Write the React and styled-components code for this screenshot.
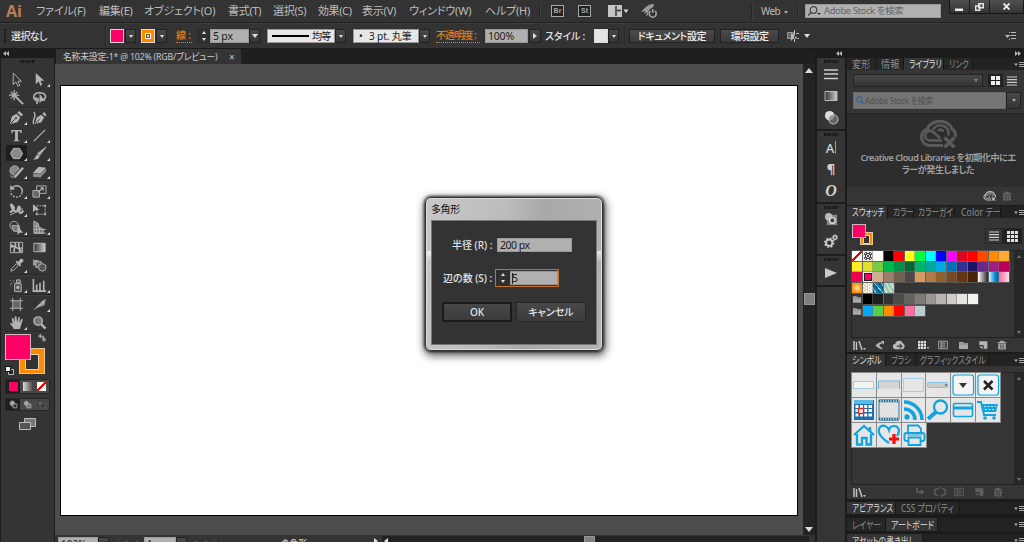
// src/App.jsx
import React from 'react';
import styled, { createGlobalStyle } from 'styled-components';

const GlobalStyle = createGlobalStyle`
  * { box-sizing: border-box; }
  body {
    margin: 0;
    overflow: hidden;
    background: #1b1b1b;
    font-family: "Noto Sans", "Noto Sans CJK JP", sans-serif;
    font-feature-settings: "palt";
    font-size: 10px;
    color: #c8c8c8;
  }
  svg { display: block; flex: none; }
`;

const Window = styled.div`
  display: flex;
  flex-direction: column;
  width: 1024px;
  height: 542px;
  overflow: hidden;
`;

const Text = styled.span`
  flex: none;
  white-space: nowrap;
  line-height: 14px;
  width: ${({ $w }) => ($w ? `${$w}px` : 'auto')};
  margin-left: ${({ $ml }) => $ml || 0}px;
  font-size: ${({ $size }) => $size || 11}px;
  font-weight: ${({ $bold }) => ($bold ? 500 : 400)};
  letter-spacing: ${({ $ls }) => $ls || 0}px;
  color: ${({ $color }) => $color || 'inherit'};
  ${({ $narrow }) => $narrow && `transform: scaleX(${$narrow}); transform-origin: left;`}
`;

const Spacer = styled.div`
  flex: ${({ $w }) => ($w ? `0 0 ${$w}px` : 1)};
`;

/* ---------- menu bar ---------- */

const MenuBar = styled.div`
  display: flex;
  align-items: center;
  flex: none;
  height: 23px;
  background: #333;
  border-bottom: 1px solid #222;
  box-shadow: 0 1px 0 #3d3d3d;
  color: #bdbdbd;
`;

const Logo = styled.div`
  flex: none;
  width: 30px;
  padding-left: 6px;
  font: bold 16px/20px "Open Sans", sans-serif;
  color: #bd7c59;
`;

const Divider = styled.div`
  flex: none;
  width: 2px;
  height: ${({ $h }) => $h || 16}px;
  margin-left: ${({ $ml }) => $ml || 0}px;
  background: #262626;
  border-right: 1px solid #3e3e3e;
`;

const AppBadge = styled.div`
  flex: none;
  width: 13px;
  height: 12px;
  margin-left: ${({ $ml }) => $ml}px;
  border: 1px solid #a9a9a9;
  background: #222;
  color: #a9a9a9;
  font: bold 7px/10px "Liberation Sans", sans-serif;
  text-align: center;
`;

const StockSearch = styled.div`
  display: flex;
  align-items: center;
  flex: none;
  width: 136px;
  height: 14px;
  margin-left: 6px;
  padding-left: 2px;
  background: #b0b0b0;
  border: 1px solid #999;
`;

const WindowButtons = styled.div`
  display: flex;
  align-self: flex-start;
  width: 75px;
  height: 14px;
  margin-left: 8px;
  border: solid #151515;
  border-width: 0 0 1px 1px;
  border-radius: 0 0 0 3px;
  background: linear-gradient(#505050, #343434);
`;

const WindowButton = styled.div`
  display: flex;
  align-items: center;
  justify-content: center;
  width: ${({ $w }) => $w}px;
  border-right: 1px solid #1b1b1b;
`;

/* ---------- control bar ---------- */

const ControlBar = styled.div`
  display: flex;
  align-items: center;
  flex: none;
  height: 26px;
  padding-left: 4px;
  background: #333;
  border-top: 1px solid #3d3d3d;
  border-bottom: 1px solid #1a1a1a;
  color: #e0e0e0;
`;

const Grip = styled.div`
  flex: none;
  width: ${({ $across }) => ($across ? 15 : 2)}px;
  height: ${({ $across }) => ($across ? 3 : 14)}px;
  background: repeating-linear-gradient(
    ${({ $across }) => ($across ? '90deg' : '180deg')},
    #1a1a1a 0 1.5px,
    #2d2d2d 1.5px 2.5px
  );
`;

const ColorChip = styled.div`
  display: flex;
  align-items: center;
  justify-content: center;
  flex: none;
  width: 14px;
  height: 14px;
  margin-left: ${({ $ml }) => $ml || 0}px;
  background: ${({ $color }) => $color};
  border: 1px solid ${({ $edge }) => $edge || '#d8d8d8'};
`;

const ChipHole = styled.div`
  width: 6px;
  height: 6px;
  border: 1px solid #fff;
  outline: 1px solid #7c4a10;
  outline-offset: -2px;
  background: #ddd;
`;

const DropButton = styled.div`
  display: flex;
  align-items: center;
  justify-content: center;
  flex: none;
  width: ${({ $w }) => $w || 11}px;
  height: ${({ $h }) => $h || 14}px;
  margin-left: ${({ $ml }) => $ml || 0}px;
  background: linear-gradient(#484848, #353535);
  border: 1px solid #222;
`;

const Triangle = styled.i`
  flex: none;
  width: 0;
  height: 0;
  margin: ${({ $m }) => $m || 0};
  border-style: solid;
  border-color: transparent;
  ${({ $dir, $s = 3, $color = '#ddd' }) => {
    if ($dir === 'up') return `border-width: 0 ${$s}px ${$s + 1}px; border-bottom-color: ${$color};`;
    if ($dir === 'right') return `border-width: ${$s}px 0 ${$s}px ${$s + 1}px; border-left-color: ${$color};`;
    if ($dir === 'left') return `border-width: ${$s}px ${$s + 1}px ${$s}px 0; border-right-color: ${$color};`;
    return `border-width: ${$s + 1}px ${$s}px 0; border-top-color: ${$color};`;
  }}
`;

const Stepper = styled.div`
  display: flex;
  flex-direction: column;
  align-items: center;
  justify-content: space-between;
  flex: none;
  width: 12px;
  height: 14px;
  padding: 1px 0;
  margin-left: ${({ $ml }) => $ml || 0}px;
  background: #303030;
  border: 1px solid #292929;
`;

const Field = styled.div`
  display: flex;
  align-items: center;
  flex: none;
  width: ${({ $w }) => $w}px;
  height: ${({ $h }) => $h || 14}px;
  margin-left: ${({ $ml }) => $ml || 0}px;
  padding-left: ${({ $pl }) => $pl || 2}px;
  background: ${({ $bg }) => $bg || '#b0b0b0'};
  border: 1px solid ${({ $edge }) => $edge || '#999'};
  color: #1c1c1c;
`;

const StrokeLine = styled.div`
  width: 37px;
  height: 2px;
  margin: 0 3px 0 2px;
  background: #000;
`;

const BarButton = styled.div`
  display: flex;
  align-items: center;
  justify-content: center;
  flex: none;
  width: ${({ $w }) => $w}px;
  height: 14px;
  margin-left: ${({ $ml }) => $ml}px;
  background: linear-gradient(#4b4b4b, #3a3a3a);
  border: 1px solid #222;
  color: #eee;
`;

const DottedText = styled(Text)`
  height: 14px;
  line-height: 12px;
  border-bottom: 1px dotted #e07f22;
`;

/* ---------- work area ---------- */

const Body = styled.div`
  display: flex;
  flex: 1;
  min-height: 0;
`;

const Column = styled.div`
  display: flex;
  flex-direction: column;
  flex: none;
  width: ${({ $w }) => $w}px;
  margin-right: ${({ $mr }) => $mr || 0}px;
`;

const DockHeader = styled.div`
  display: flex;
  align-items: center;
  justify-content: ${({ $end }) => ($end ? 'flex-end' : 'flex-start')};
  flex: none;
  height: 9px;
  padding: 0 3px;
  background: #1c1c1c;
`;

const ToolPanel = styled.div`
  display: flex;
  flex-direction: column;
  align-items: center;
  flex: 1;
  padding-top: 2px;
  margin-left: 1px;
  background: #343434;
`;

const ToolGroup = styled.div`
  display: grid;
  grid-template-columns: 23px 23px;
  grid-auto-rows: 18px;
  margin-top: ${({ $mt }) => $mt || 0}px;
  padding-bottom: ${({ $pb }) => $pb || 0}px;
  border-bottom: 1px solid #282828;
  box-shadow: 0 1px 0 #3c3c3c;
`;

const ToolCell = styled.div`
  position: relative;
  display: flex;
  align-items: center;
  justify-content: center;
  margin: 1px 1px;
  background: ${({ $active }) => ($active ? '#1e1e1e' : 'transparent')};
`;

const Corner = styled.i`
  position: absolute;
  right: 0;
  bottom: 0;
  border: solid transparent;
  border-width: 0 0 3px 3px;
  border-bottom-color: #ddd;
`;

const ColorWell = styled.div`
  position: relative;
  width: 46px;
  height: 43px;
  margin-top: 1px;
`;

const WellFill = styled.div`
  position: absolute;
  left: ${({ $x }) => $x}px;
  top: ${({ $y }) => $y}px;
  width: ${({ $s }) => $s}px;
  height: ${({ $s }) => $s}px;
  background: #ff0066;
  border: 1px solid #d5b5c0;
`;

const WellStroke = styled.div`
  position: absolute;
  left: ${({ $x }) => $x}px;
  top: ${({ $y }) => $y}px;
  width: ${({ $s }) => $s}px;
  height: ${({ $s }) => $s}px;
  padding: ${({ $p }) => $p}px;
  background: #ff8a00;
  border: 1px solid #e0c8a0;

  &::after {
    content: '';
    display: block;
    height: 100%;
    background: #333;
    border: 1px solid #e8d8b8;
  }
`;

const WellIcon = styled.div`
  position: absolute;
  left: ${({ $x }) => $x}px;
  top: ${({ $y }) => $y}px;
`;

const Modes = styled.div`
  display: flex;
  width: 45px;
  height: ${({ $h }) => $h}px;
  margin-top: ${({ $mt }) => $mt}px;
  background: #484848;
  border: 1px solid #262626;
`;

const Mode = styled.div`
  display: flex;
  align-items: center;
  justify-content: center;
  flex: 1;
  background: ${({ $on }) => ($on ? '#1f1f1f' : 'transparent')};
`;

const ModeChip = styled.div`
  width: 9px;
  height: 9px;
  background: ${({ $bg }) => $bg};
`;

/* ---------- document ---------- */

const TabStrip = styled.div`
  display: flex;
  flex: none;
  height: 15px;
  background: #1f1f1f;
`;

const DocTab = styled.div`
  display: flex;
  align-items: center;
  width: 185px;
  padding-left: 7px;
  background: #343434;
  color: #c9c9c9;
`;

const DocRow = styled.div`
  display: flex;
  flex: none;
  height: 471px;
`;

const Pasteboard = styled.div`
  width: 748px;
  padding: 21px 5px 0 5px;
  background: #4d4d4d;
`;

const Artboard = styled.div`
  height: 431px;
  background: #fff;
  border: 1px solid #000;
`;

const VScroll = styled.div`
  display: flex;
  flex-direction: column;
  align-items: center;
  width: 12px;
  padding: 4px 0 3px;
  background: #242424;
`;

const Thumb = styled.div`
  width: 11px;
  height: 12px;
  background: #808080;
  border: 1px solid #969696;
`;

const StatusBar = styled.div`
  display: flex;
  align-items: flex-start;
  flex: 1;
  padding: 2px 0 0 3px;
  background: #343434;
  overflow: hidden;
`;

const HTrack = styled.div`
  display: flex;
  align-self: stretch;
  align-items: flex-start;
  width: 427px;
  margin: -1px 0 0 4px;
  padding-left: 2px;
  background: #222;
`;

/* ---------- icon dock ---------- */

const DockGroup = styled.div`
  display: flex;
  flex-direction: column;
  align-items: center;
  flex: none;
  height: ${({ $h }) => $h}px;
  padding-top: 2px;
  background: #353535;
  border-bottom: 2px solid #1d1d1d;
`;

const DockIcon = styled.div`
  display: flex;
  align-items: center;
  justify-content: center;
  width: 28px;
  height: 21.5px;
  margin-top: ${({ $mt }) => $mt || 0}px;
  color: #d2d2d2;
  font: ${({ $font }) => $font || '14px "Noto Sans"'};
`;

const Caret = styled.i`
  width: 1px;
  height: 13px;
  margin-left: 1px;
  background: #999;
`;

/* ---------- panels ---------- */

const PanelTabs = styled.div`
  display: flex;
  flex: none;
  height: ${({ $h }) => $h || 12}px;
  margin-top: ${({ $mt }) => $mt || 0}px;
  background: #222;
`;

const PanelTab = styled.div`
  display: flex;
  align-items: center;
  flex: none;
  width: ${({ $w }) => $w}px;
  padding-left: ${({ $pl }) => $pl || 5}px;
  overflow: hidden;
  background: ${({ $active }) => ($active ? '#353535' : '#262626')};
  border-right: 1px solid #161616;
  color: ${({ $active }) => ($active ? '#dedede' : '#8c8c8c')};
`;

const Panel = styled.div`
  display: flex;
  flex-direction: column;
  flex: none;
  height: ${({ $h }) => $h}px;
  background: #353535;
`;

const PanelRow = styled.div`
  display: flex;
  align-items: center;
  flex: none;
  height: ${({ $h }) => $h}px;
  padding-left: ${({ $pl }) => $pl || 6}px;
`;

const Toggle = styled.div`
  display: flex;
  align-items: center;
  justify-content: center;
  width: ${({ $w }) => $w}px;
  height: ${({ $h }) => $h}px;
  margin-left: ${({ $ml }) => $ml || 0}px;
  background: ${({ $on }) => ($on ? '#202020' : '#353535')};
  border: 1px solid ${({ $edge }) => ($edge ? '#252525' : 'transparent')};
`;

const LibraryError = styled.div`
  display: flex;
  flex-direction: column;
  align-items: center;
  height: 74px;
  padding: 5px 0 0 5px;
  background: #2d2d2d;
  border-top: 2px solid #262626;
  color: #a0a0a0;
`;

const ErrorText = styled.p`
  margin: 4px 0 0;
  font-size: 9px;
  font-weight: 600;
  line-height: 12px;
  letter-spacing: -0.43px;
  text-align: center;
  white-space: nowrap;
`;

const ListFrame = styled.div`
  display: flex;
  flex: none;
  height: ${({ $h }) => $h}px;
  margin-left: 4px;
  border: solid #222;
  border-width: 1px 0 1px 1px;
`;

const ListBody = styled.div`
  width: 162px;
`;

const ListScroll = styled.div`
  display: flex;
  flex-direction: column;
  align-items: center;
  justify-content: space-between;
  width: 10px;
  padding: 4px 0 3px;
  background: #272727;
`;

const SwatchRow = styled.div`
  display: flex;
  gap: 0.5px;
  margin-top: ${({ $mt }) => $mt || 0}px;
`;

const Swatch = styled.div`
  flex: none;
  width: 10px;
  height: 10px;
  margin-bottom: 0.5px;
  background: ${({ $bg }) => $bg};
  box-shadow: 0 0 0 0.5px #777;
  ${({ $selected }) => $selected && 'border: 1px solid #eee; outline: 1px solid #222; outline-offset: -2px;'}
`;

const SwatchWell = styled.div`
  position: relative;
  width: 132px;
  height: 24px;
`;

const SymbolGrid = styled.div`
  display: grid;
  grid-template-columns: repeat(6, 24px);
  grid-auto-rows: 24px;
  gap: 0.8px;
`;

const SymbolCell = styled.div`
  display: flex;
  align-items: center;
  justify-content: center;
  background: #e6e6e6;
  box-shadow: 0 0 0 1px #8a8a8a;
`;

/* ---------- dialog ---------- */

const Dialog = styled.div`
  position: absolute;
  left: 425px;
  top: 197px;
  width: 178px;
  height: 154px;
  padding: 0 5px;
  border: 1px solid #333;
  border-radius: 6px;
  background:
    linear-gradient(transparent 35%, rgba(255, 255, 255, 0.75) 35%, rgba(255, 255, 255, 0) 42%),
    linear-gradient(100deg, #c8c8c8 0%, #bcbcbc 40%, #a8a8a8 60%, #b4b4b4 100%);
  box-shadow: inset 0 0 0 1px #dcdcdc, 0 0 3px 1px rgba(0, 0, 0, 0.75), 1px 3px 8px 2px rgba(0, 0, 0, 0.6);
`;

const DialogTitle = styled.div`
  height: 22px;
  padding: 4px 0 0;
  color: #111;
`;

const DialogBody = styled.div`
  height: 125px;
  background: #333;
  border: 1px solid #777;
  color: #e4e4e4;
`;

const FormRow = styled.div`
  display: flex;
  align-items: center;
  height: 18px;
  margin-top: ${({ $mt }) => $mt}px;
  padding-left: ${({ $pl }) => $pl}px;
`;

const FocusRing = styled.div`
  display: flex;
  width: 64px;
  height: 18px;
  padding: 1px;
  margin-left: 3px;
  border: 1px solid #c87020;
`;

const TextCursor = styled.i`
  width: 1px;
  height: 11px;
  margin-right: -1px;
  background: #222;
`;

const DialogButtons = styled.div`
  display: flex;
  gap: 4px;
  margin: 15px 0 0 10px;
`;

const DialogButton = styled.div`
  display: flex;
  align-items: center;
  justify-content: center;
  width: 70px;
  height: 20px;
  background: linear-gradient(#484848, #3b3b3b);
  border: ${({ $primary }) => ($primary ? '2px solid #1a1a1a' : '1px solid #262626')};
`;

/* ---------- drawings ---------- */

const G = '#b4b4b4';

const Icon = ({ w = 16, h = w, box = '0 0 16 16', children }) => (
  <svg width={w} height={h} viewBox={box} fill="none" stroke="none">
    {children}
  </svg>
);

const TOOLS = {
  select: <path d="M4.500 1v12.500l3-2.800 2 4.600 2-.9-2-4.500h3.700z" stroke={G} />,
  direct: <path d="M4 1v12l3-2.800 2 4.400 2-.9-2-4.300h4z" fill={G} />,
  wand: (
    <>
      <path d="M7 7l8 8" stroke={G} strokeWidth="2" />
      <path d="M5.500 0v11M0 5.500h11M2 2l7 7M9 2L2 9" stroke={G} strokeWidth="1.300" />
    </>
  ),
  lasso: (
    <>
      <path d="M5 11C0 10 1 3 8 3s8 5.500 4 7.500M5 8c-2 1-1 4 1 3.500S6 8 4.500 9.500M6 12l-1 3" stroke={G} strokeWidth="1.700" />
      <path d="M8 4v10l2.200-2.400H14z" fill={G} />
    </>
  ),
  pen: (
    <>
      <path d="M1 15l2-8 5-3 4 4-3 5z" fill={G} />
      <path d="M9 3l2-2 4 4-2 2z" fill={G} />
      <path d="M2 14l5-5" stroke="#333" />
      <circle cx="7.500" cy="8.500" r="1" fill="#333" />
    </>
  ),
  curvature: (
    <>
      <path d="M3 15l2-7 5-3 3 3-3 5z" fill={G} />
      <path d="M11 4l2-2 2.500 3-1.500 2z" fill={G} />
      <path d="M4 14l4-4" stroke="#333" />
      <path d="M2 15C-1 11 6 7 2 2" stroke={G} strokeWidth="1.500" />
    </>
  ),
  type: <path d="M2.500 2h11v3.500h-1c-.3-1.700-.8-2-3-2V12c0 1 .5 1.200 1.500 1.200V14H5v-.8c1 0 1.500-.2 1.500-1.200V3.500c-2.200 0-2.700.3-3 2h-1z" fill={G} />,
  line: <path d="M2 14L14 2" stroke={G} strokeWidth="1.300" />,
  polygon: <path d="M4.700 2.500h6.600L14.500 8l-3.200 5.500H4.700L1.500 8z" fill="#8a8a8a" stroke="#b8b8b8" />,
  brush: (
    <>
      <path d="M15 1L8 10 6 8z" fill={G} stroke={G} />
      <path d="M1 14c3 0 2-4 5-5l2 2c0 3-4 4-7 3z" fill={G} />
    </>
  ),
  shaper: (
    <>
      <circle cx="6" cy="7" r="5" fill="#888" stroke={G} />
      <path d="M6 14l9-10" stroke="#333" strokeWidth="4" />
      <path d="M6 14l9-10" stroke={G} strokeWidth="2.500" />
      <path d="M1 12c1 2 3 2 5 2" stroke={G} />
    </>
  ),
  eraser: (
    <>
      <path d="M1 9.500L7 3l8 1-6 6.500z" fill={G} />
      <path d="M1 10v3.500l8 1V11zM9 11v3.500l6-6.500V4.500z" fill="#8d8d8d" />
    </>
  ),
  rotate: (
    <>
      <path d="M4 3.500c5-4 11 0 10 5.500" stroke={G} strokeWidth="1.500" />
      <path d="M14 9c-1 6-9 7-12 1V8" stroke={G} strokeWidth="1.500" strokeDasharray="2 1.500" />
      <path d="M1 6.500l.5-5.500 5 4.500z" fill={G} />
    </>
  ),
  scale: (
    <>
      <path d="M5 2h10v8H5z" stroke={G} />
      <path d="M1 7h7v7H1z" fill="#666" stroke={G} />
      <path d="M6 9l6-5M9 4h3v3" stroke={G} strokeWidth="1.200" />
    </>
  ),
  width: (
    <>
      <path d="M1 11c2-1 3-1 4-3S4 3 3 4s1 5 4 6 2-6 4-5-1 5 0 6 3 1 4-2" stroke={G} strokeWidth="2.200" />
      <path d="M1 14l14-7" stroke={G} />
      <circle cx="2.500" cy="3" r="1.500" fill={G} />
    </>
  ),
  transform: (
    <>
      <path d="M5 4h9v9H5z" stroke={G} strokeDasharray="2 1" />
      <path d="M1 2v9l2.500-2.500H8z" fill={G} />
      <path d="M13 3h2v2h-2zM13 12h2v2h-2zM4 12h2v2H4z" fill={G} />
    </>
  ),
  shapeBuilder: (
    <>
      <circle cx="5.500" cy="6" r="4.500" stroke={G} />
      <path d="M3 6h8v6H5z" stroke={G} fill="#777" />
      <path d="M9 6v10l2.200-2.500H15z" fill={G} />
    </>
  ),
  perspective: (
    <>
      <path d="M2 1l5 3v3l5 3v4H2z" fill="#777" stroke={G} />
      <path d="M5 3v11M8 7v7M2 6l5 1M2 10h13M2 14h13" stroke={G} />
    </>
  ),
  mesh: (
    <>
      <path d="M1.500 2.500h13v11h-13z" stroke={G} />
      <path d="M2 8c4-5 7 5 12 0M6 3c4 3-3 7 0 10M11 3c-3 4 3 6 0 10M2 5l4 2M10 10l4 2" stroke={G} strokeWidth="1.700" />
    </>
  ),
  gradient: (
    <>
      <defs>
        <linearGradient id="toolGradient"><stop stopColor="#333" /><stop offset="1" stopColor="#ccc" /></linearGradient>
      </defs>
      <path d="M2 3.500h12v9H2z" fill="url(#toolGradient)" stroke="#bbb" />
    </>
  ),
  dropper: (
    <>
      <path d="M2 14l1-3 5-5 2 2-5 5z" stroke={G} />
      <path d="M7 4l1-1 2 1 2-3c3-1 4 1 3 3l-3 2 1 2-1 1z" fill={G} />
    </>
  ),
  blend: (
    <>
      <path d="M1 2h6v6H1z" fill="#999" />
      <path d="M4 4h6v6H4z" fill="#666" stroke={G} />
      <circle cx="11" cy="10" r="4" fill="#555" stroke={G} />
    </>
  ),
  spray: (
    <>
      <path d="M6 6h7v8.500H6zM8 2h4v3H8z" stroke={G} fill="#555" />
      <circle cx="9.500" cy="10" r="1.800" fill={G} />
      <path d="M1 2h1v1H1zM4 2h1v1H4zM2 5h1v1H2zM5 4h1v1H5zM1 7h1v1H1z" fill={G} />
    </>
  ),
  graph: (
    <path d="M1.500 1v13H15M5 13V7M8.500 13V5M12.500 13V3" stroke={G} strokeWidth="1.700" />
  ),
  artboard: (
    <>
      <path d="M4 4h8v8H4z" fill="#666" />
      <path d="M4 1v14M12 1v14M1 4h14M1 12h14" stroke={G} />
    </>
  ),
  slice: <path d="M1 14L11 4l4-2-2 7-4 1-2 1zM9 6l3 3" fill={G} stroke="#555" strokeWidth=".6" />,
  hand: <path d="M5 15c0-2-3-4-4-6 1-1 2 0 3 1L3 3.500c1-1 2 0 2 1L6 8V2c1-1 2-1 2 0l.5 6L10 2.500c1-1 2 0 1.500 1L11 8.500l2-4c1-.5 2 0 1.500 1L12.500 12l-1 3z" fill={G} />,
  zoom: (
    <>
      <circle cx="6.500" cy="6.500" r="4.500" fill="#777" stroke={G} strokeWidth="1.500" />
      <path d="M10 10l4.500 4.500" stroke={G} strokeWidth="2.500" />
    </>
  ),
};

const Tool = ({ name, plain, active }) => (
  <ToolCell $active={active}>
    <Icon w={15}>{TOOLS[name]}</Icon>
    {!plain && <Corner />}
  </ToolCell>
);

const Collapse = ({ right }) => (
  <svg width="6" height="5" viewBox="0 0 6 5" fill="#b5b5b5">
    {right ? <path d="M0 0l3 2.500L0 5zM3 0l3 2.500L3 5z" /> : <path d="M3 0L0 2.500 3 5zM6 0L3 2.500 6 5z" />}
  </svg>
);

const PanelMenu = () => (
  <svg width="10" height="12" viewBox="0 0 10 12">
    <path d="M0 5.500h4l-2 2.500zM5 4h6v1H5zM5 6h6v1H5zM5 8h6v1H5z" fill="#aaa" />
  </svg>
);

const CloudX = ({ w, h, color, bg }) => (
  <Icon w={w} h={h} box="0 0 38 28">
    <path d="M24 25.500H10A8.500 8.500 0 0 1 8.500 9C12-1.500 30-1 33 9c3 2 4 5 3 8" stroke={color} strokeWidth="3.200" />
    <path d="M23 20.500H11a4.800 4.800 0 0 1 0-9.600c4 0 6 4 10 7.500M14 10C17 2.500 29 4.500 29.500 13c0 1.500-.5 3-1 3.500M19 11c2-2.500 5-1 5 1" stroke={color} strokeWidth="2.600" />
    <path d="M26 17l9 9M35 17l-9 9" stroke={bg} strokeWidth="6.500" />
    <path d="M25.500 17.500l10 10M35.500 17.500l-10 10" stroke={color} strokeWidth="3.500" />
  </Icon>
);

const Trash = ({ color = '#aaa' }) => (
  <Icon w={10}>
    <path d="M1 3h14v2H1zM5 1h6v2H5zM2 6h12v9H2z" fill={color} />
    <path d="M5.500 7v7M8 7v7M10.500 7v7" stroke="#333" />
  </Icon>
);

const NewItem = ({ color = '#b4b4b4' }) => (
  <Icon w={10}>
    <path d="M2 2h13v12H9V8H2z" fill={color} />
    <path d="M2 10h5v5z" fill={color} />
  </Icon>
);

const LibraryMenu = () => (
  <Icon w={13} h={11} box="0 0 13 11">
    <path d="M1 1v9M3.500 2v8M6 1l3 9" stroke="#c0c0c0" strokeWidth="1.500" />
    <path d="M10 8h3l-1.500 2z" fill="#c0c0c0" />
  </Icon>
);

const Folder = ({ w = 11 }) => (
  <Icon w={w} h={10} box="0 0 11 10">
    <path d="M1 2h4l1 1h4v6H1z" fill="#aaa" />
    <path d="M1 4h9" stroke="#777" strokeWidth=".7" />
  </Icon>
);

const Boxed = ({ color }) => (
  <Icon w={10}>
    <path d="M1 2h14v12H1z" stroke={color} strokeWidth="1.500" />
    <path d="M4 5h8M4 8h8M4 11h8M5 3v10" stroke={color} strokeWidth="1.500" />
  </Icon>
);

const ListLines = () => (
  <Icon w={10} box="0 0 10 10">
    <path d="M0 1h10M0 3.700h10M0 6.300h10M0 9h10" stroke="#ccc" strokeWidth="1.200" />
  </Icon>
);

const Squares = ({ n, w = 11 }) => (
  <Icon w={w} box="0 0 12 12">
    {n === 2 ? (
      <path d="M1 1h4.500v4.500H1zM6.500 1H11v4.500H6.500zM1 6.500h4.500V11H1zM6.500 6.500H11V11H6.500z" fill="#eee" />
    ) : (
      <path d="M0 0h3.400v3.400H0zM4.300 0h3.400v3.400H4.300zM8.600 0H12v3.400H8.600zM0 4.300h3.400v3.400H0zM4.300 4.300h3.400v3.400H4.300zM8.600 4.300H12v3.400H8.600zM0 8.600h3.400V12H0zM4.300 8.600h3.400V12H4.300zM8.600 8.600H12V12H8.600z" fill="#ddd" />
    )}
  </Icon>
);

const B = '#10a5e0';

const SYMBOLS = [
  <path d="M1.500 8.500h20v7h-20z" fill="#f4f4f4" stroke="#9fcbe0" />,
  <><path d="M1.500 8.500h21v7h-21z" fill="#d4d4d4" /><path d="M1.500 16V8h21v8" stroke="#6cb9df" /></>,
  <path d="M1.500 5.500h20v13h-20z" stroke="#8fcdea" strokeWidth=".8" />,
  <><rect x="1.500" y="9.500" width="20.500" height="5" rx="1" fill="#ccc" stroke="#82c2e4" /><path d="M19 12h2" stroke="#222" /></>,
  <><rect x="2" y="2" width="20.500" height="20" rx="2.500" fill="#f4f4f4" stroke={B} strokeWidth="1.200" /><path d="M8 10h8l-4 5z" fill="#333" /></>,
  <><rect x="2" y="2" width="20.500" height="20" rx="2.500" fill="#f4f4f4" stroke={B} strokeWidth="1.200" /><path d="M8 8l8.500 8.500M16.500 8L8 16.500" stroke="#222" strokeWidth="2.500" /></>,
  <>
    <path d="M2 2h20v20H2z" fill="#1f6faa" />
    <path d="M2 2h19v4H2z" fill="#58bce8" />
    <path d="M3.500 7h3v3h-3zM3.500 11h3v3h-3zM8 7h3v3H8zM12.200 7h3v3h-3zM16.500 7h3.500v3h-3.500zM8 11h3v3H8zM12.200 11h3v3h-3zM16.500 11h3.500v3h-3.500zM3.500 15.500h3v3h-3zM8 15.500h3v3H8zM12.200 15.500h3v3h-3zM16.500 15.500h3.500v3h-3.500z" fill="#fff" />
    <path d="M6.500 10.500h5v5h-5z" fill="#fff" stroke="#e22" strokeWidth="1.500" />
  </>,
  <>
    <path d="M2 2h20v20H2z" fill="#e2e2e2" stroke="#2779aa" />
    <path d="M2 3h20M2 21h20" stroke="#1d6590" strokeWidth="2.500" />
    <path d="M3 3h19M3 21h19" stroke="#e6e6e6" strokeWidth="1.300" strokeDasharray="1.300 1.300" />
  </>,
  <><circle cx="5" cy="19" r="2.700" fill={B} /><path d="M2 11c6 0 11 4 11 11M2 4c10 0 18 8 18 18" stroke={B} strokeWidth="3.500" /></>,
  <><circle cx="14.500" cy="9" r="6.500" stroke={B} strokeWidth="2.300" /><path d="M10 14l-8 7" stroke={B} strokeWidth="4" /></>,
  <><rect x="2.500" y="5.500" width="19" height="13" rx="1.500" stroke={B} strokeWidth="1.600" /><path d="M2 10h20" stroke={B} strokeWidth="3" /></>,
  <><path d="M1 4h4l3 13h12" stroke={B} strokeWidth="2" /><path d="M6 6h16l-2 8H8z" fill={B} /><path d="M8 8.500h12M9 11.500h10" stroke="#e6e6e6" strokeWidth=".9" strokeDasharray="2 1.500" /><circle cx="9" cy="20" r="1.800" fill={B} /><circle cx="18" cy="20" r="1.800" fill={B} /></>,
  <><path d="M2 12L12 3l10 9M5 11v10.500h5V15h4.500v6.500H19V11" stroke={B} strokeWidth="2.300" /><path d="M18 4v5" stroke={B} strokeWidth="2.500" /></>,
  <><path d="M12 20C-4 10 2 1 8 3c3 1 4 4 4 4s1-4 5-4 7 4 3 10" stroke={B} strokeWidth="2.200" /><path d="M17 11v10M12 16h10" stroke="#f01010" strokeWidth="3.200" /></>,
  <><path d="M6 10V2.500h10l3 3V10" stroke={B} strokeWidth="1.800" /><rect x="2.500" y="10" width="20" height="8" rx="2" fill="#e6e6e6" stroke={B} strokeWidth="2" /><path d="M6.500 14.500h12V22h-12z" fill="#e6e6e6" stroke={B} strokeWidth="1.800" /><path d="M5 12h15" stroke={B} /></>,
];

/* ---------- data ---------- */

const MENU = [
  ['ファイル(F)', 63, -0.1],
  ['編集(E)', 45, -0.2],
  ['オブジェクト(O)', 84, -0.2],
  ['書式(T)', 45, -0.3],
  ['選択(S)', 45, -0.3],
  ['効果(C)', 44, -0.4],
  ['表示(V)', 47, -0.2],
  ['ウィンドウ(W)', 76, -0.15],
  ['ヘルプ(H)', 54, -0.2],
];

const NONE = 'linear-gradient(-45deg, transparent 43%, #e00 43% 57%, transparent 57%), #fff';
const REGISTER = 'radial-gradient(circle, #444 0 1px, #eee 1px 2px, #444 2px 3px, #eee 3px 3.8px, #555 3.8px 4.500px, #eee 4.500px)';

const SWATCHES = [
  [NONE, REGISTER, '#fff', '#000', '#ff0000', '#ffff1a', '#00ff40', '#00ffff', '#0000ff', '#ff00ff', '#dc0820', '#ff0000', '#ff4a00', '#ff8c00', '#ffa92e'],
  ['#ffee22', '#dce22b', '#7ac943', '#00b74c', '#009245', '#006837', '#00b371', '#00a99d', '#00a8e6', '#0071bc', '#2e3192', '#1b1464', '#6a2888', '#a31c82', '#b8005a'],
  ['#f00050', '#ff0066', '#d0ae90', '#9c7f6b', '#73614f', '#514641', '#d59a62', '#b17a48', '#92602f', '#7b4822', '#653610', '#452409', 'linear-gradient(90deg, #fff, #222)', 'linear-gradient(90deg, #cdefff, #0090d8 60%, #09528a)', 'linear-gradient(90deg, #ff6e9c, #ffdce8)'],
  ['radial-gradient(#ffe7ba, #ff8c00 70%)', 'repeating-conic-gradient(#fff 0 20deg, #d9caa2 20deg 40deg)', 'repeating-linear-gradient(50deg, #0b608f 0 2px, #8ccbe4 2px 3px, #1379a8 3px 5px)', 'repeating-linear-gradient(60deg, #8cc9ba 0 2px, #e6e4a0 2px 3px, #bcd8d0 3px 4px)'],
];

const GRAYS = ['#000', '#1e1e1e', '#303332', '#4b4b49', '#656360', '#7e7b75', '#9a9691', '#b8b4af', '#d0cdc9', '#e7e5e2', '#f3f2f0'];
const BRIGHTS = ['#03a9f4', '#58cf48', '#ff8c00', '#ff0000', '#ff6f9e', '#bccdd0'];

/* ---------- sections ---------- */

const TopBar = () => (
  <MenuBar>
    <Logo>Ai</Logo>
    <Spacer $w={6} />
    {MENU.map(([label, w, ls]) => (
      <Text key={label} $w={w} $ls={ls}>{label}</Text>
    ))}
    <Divider />
    <AppBadge $ml={10}>Br</AppBadge>
    <AppBadge $ml={14}>St</AppBadge>
    <Spacer $w={17} />
    <Icon w={21} h={12} box="0 0 21 12">
      <path d="M0 0h14v12H0z" fill="#c4c4c4" />
      <path d="M8 1v10M9 5.500h4" stroke="#333" strokeWidth="1.500" />
      <path d="M15.500 4.500h5L18 8z" fill="#ddd" />
    </Icon>
    <Spacer $w={12} />
    <Icon w={17} h={14} box="0 0 17 14">
      <path d="M0 8C3 5 6 0 13 0c0 2-1 3-2 4-3 1-4 4-4 7L5 12l1-4-3 2 1-3z" fill="#999" />
      <path d="M9.500 7a3.500 3.500 0 1 0 4.500 0M11.800 5v4" stroke="#aaa" strokeWidth="1.500" />
    </Icon>
    <Spacer $w={93} />
    <Divider />
    <Text $ml={8} $w={23} $size={10} $ls={-0.6}>Web</Text>
    <Triangle $s={2} $m="3px 0 0 0" $color="#aaa" />
    <Spacer $w={9} />
    <Divider />
    <StockSearch>
      <Icon w={14} h={10} box="0 0 14 10">
        <circle cx="5.500" cy="4" r="3.300" stroke="#444" strokeWidth="1.200" />
        <path d="M3 6.500L0 9.500" stroke="#444" strokeWidth="1.500" />
        <path d="M9 7h4l-2 2z" fill="#333" />
      </Icon>
      <Text $ml={2} $size={9.5} $ls={-0.42} $color="#666">Adobe Stock を検索</Text>
    </StockSearch>
    <WindowButtons>
      <WindowButton $w={20}>
        <Icon w={8} h={9} box="0 0 8 9"><path d="M0 6.500h8v2.500H0z" fill="#eee" /></Icon>
      </WindowButton>
      <WindowButton $w={21}>
        <Icon w={9} h={8} box="0 0 9 8"><path d="M3.700.7h4.600v4.100H3.700zM.7 3h4.100v4.300H.7z" stroke="#e4e4e4" strokeWidth="1.400" /></Icon>
      </WindowButton>
      <WindowButton $w={34}>
        <Icon w={7} box="0 0 7 7"><path d="M.5.5l6 6M6.500.5l-6 6" stroke="#f0f0f0" strokeWidth="1.800" /></Icon>
      </WindowButton>
    </WindowButtons>
  </MenuBar>
);

const Controls = () => (
  <ControlBar>
    <Grip />
    <Text $ml={5} $w={94} $size={10} $bold $ls={-0.6}>選択なし</Text>
    <Divider $h={20} />
    <ColorChip $ml={3} $color="#ff0066" />
    <DropButton $ml={1}><Triangle $s={2.5} /></DropButton>
    <ColorChip $ml={5} $color="#ff8a00"><ChipHole /></ColorChip>
    <DropButton $ml={1}><Triangle $s={2.5} /></DropButton>
    <DottedText $ml={9} $w={16} $size={10} $bold $ls={-0.2} $color="#e07f22">線 :</DottedText>
    <Stepper $ml={6}><Triangle $dir="up" $s={2.5} /><Triangle $s={2.5} /></Stepper>
    <Field $w={39}><Text $size={10.5} $ls={-0.2}>5 px</Text></Field>
    <DropButton><Triangle /></DropButton>
    <Field $ml={7} $w={68} $bg="#e6e6e6"><StrokeLine /><Text $size={10} $ls={-0.7}>均等</Text></Field>
    <DropButton><Triangle $s={2.5} /></DropButton>
    <Field $ml={7} $w={66} $pl={5} $bg="#e6e6e6"><Text $size={10} $w={10}>•</Text><Text $size={10} $ls={-0.1}>3 pt. 丸筆</Text></Field>
    <DropButton><Triangle $s={2.5} /></DropButton>
    <DottedText $ml={6} $w={44} $size={10} $bold $ls={-0.9} $color="#e07f22">不透明度 :</DottedText>
    <Field $ml={5} $w={43}><Text $size={10.5} $ls={-0.2}>100%</Text></Field>
    <DropButton $ml={1} $w={12}><Triangle $dir="right" /></DropButton>
    <Text $ml={4} $w={49} $size={10} $bold $ls={-0.2}>スタイル :</Text>
    <ColorChip $color="#e4e4e4" />
    <DropButton><Triangle $s={2.5} /></DropButton>
    <Divider $h={20} $ml={5} />
    <BarButton $ml={3} $w={86}><Text $size={10} $bold $ls={-0.3}>ドキュメント設定</Text></BarButton>
    <BarButton $ml={5} $w={59}><Text $size={10} $bold $ls={-0.6}>環境設定</Text></BarButton>
    <Spacer $w={8} />
    <Icon w={13} h={12} box="0 0 13 12">
      <path d="M.5 2.500h6v6h-6z" fill="#666" stroke="#999" />
      <path d="M7 0h1v12H7zM9 3h3v1H9zM9 8h3v1H9zM4 3v8l2.500-2.500H11z" fill="#bbb" />
    </Icon>
    <Triangle $s={3} $m="0 0 0 4px" />
    <Spacer />
    <Icon w={19} h={10} box="0 0 19 10">
      <path d="M0 4h5L2.500 7z" fill="#bbb" />
      <path d="M4.500 1v1M4.500 4.500h1M4.500 8v1M6 1.500h5M6 4.500h5M6 7.500h5" stroke="#bbb" />
    </Icon>
  </ControlBar>
);

const Toolbox = () => (
  <Column $w={54} $mr={1}>
    <DockHeader><Collapse /></DockHeader>
    <ToolPanel>
      <Grip $across />
      <ToolGroup $mt={7} $pb={1}>
        <Tool name="select" plain /><Tool name="direct" />
        <Tool name="wand" plain /><Tool name="lasso" plain />
      </ToolGroup>
      <ToolGroup>
        <Tool name="pen" /><Tool name="curvature" plain />
        <Tool name="type" /><Tool name="line" />
        <Tool name="polygon" active /><Tool name="brush" />
        <Tool name="shaper" /><Tool name="eraser" />
      </ToolGroup>
      <ToolGroup $mt={1}>
        <Tool name="rotate" /><Tool name="scale" />
        <Tool name="width" /><Tool name="transform" plain />
        <Tool name="shapeBuilder" /><Tool name="perspective" />
      </ToolGroup>
      <ToolGroup $mt={1}>
        <Tool name="mesh" plain /><Tool name="gradient" plain />
        <Tool name="dropper" /><Tool name="blend" plain />
      </ToolGroup>
      <ToolGroup $mt={1}>
        <Tool name="spray" /><Tool name="graph" />
      </ToolGroup>
      <ToolGroup>
        <Tool name="artboard" plain /><Tool name="slice" />
        <Tool name="hand" /><Tool name="zoom" plain />
      </ToolGroup>
      <ColorWell>
        <WellStroke $x={14} $y={15} $s={26} $p={5} />
        <WellFill $x={0} $y={1} $s={26} />
        <WellIcon $x={33} $y={1}>
          <Icon w={8}><path d="M4 4h5c3 0 3 2 3 8M5 0L1 4l4 4zM8 10l4 5 4-5z" stroke={G} strokeWidth="1.500" fill={G} fillOpacity=".6" /></Icon>
        </WellIcon>
        <WellIcon $x={0} $y={33}>
          <Icon w={9} box="0 0 9 9"><path d="M3.500 3.500h5v5h-5z" fill="#222" stroke="#bbb" /><path d="M.5.5h5v5h-5z" fill="#eee" stroke="#111" /></Icon>
        </WellIcon>
      </ColorWell>
      <Modes $h={15} $mt={3}>
        <Mode $on><ModeChip $bg="#ff0066" /></Mode>
        <Mode><ModeChip $bg="linear-gradient(90deg, #ddd, #5a4f49)" /></Mode>
        <Mode><ModeChip $bg={NONE} /></Mode>
      </Modes>
      <Modes $h={13} $mt={4}>
        {['#aaa', '#aaa', '#5c5c5c'].map((c, i) => (
          <Mode key={i} $on={i === 0}>
            <Icon w={9}><circle cx="6" cy="6" r="5" fill={c} stroke="#222" /><path d="M7 7h7v7H7z" fill={i === 1 ? '#777' : '#333'} stroke={c} strokeWidth="1.500" /></Icon>
          </Mode>
        ))}
      </Modes>
      <Spacer $w={7} />
      <Icon w={17} h={13} box="0 0 17 13">
        <path d="M5.500.5h11v8h-11z" fill="#777" stroke="#bbb" />
        <path d="M.5 4.500h11v7H.5z" fill="#555" stroke="#bbb" />
      </Icon>
    </ToolPanel>
  </Column>
);

const Document = () => (
  <Column $w={760} $mr={2}>
    <TabStrip>
      <Spacer $w={1} />
      <DocTab>
        <Text $w={166} $size={9.5} $narrow={0.93} $ls={-0.25}>名称未設定-1* @ 102% (RGB/プレビュー)</Text>
        <Text $size={10}>×</Text>
      </DocTab>
    </TabStrip>
    <DocRow>
      <Pasteboard><Artboard /></Pasteboard>
      <VScroll>
        <Triangle $dir="up" $s={4} />
        <Spacer $w={220} />
        <Thumb />
        <Spacer />
        <Triangle $s={4} />
      </VScroll>
    </DocRow>
    <StatusBar>
      <Field $w={40}><Text $size={10}>102%</Text></Field>
      <DropButton><Triangle /></DropButton>
      <Spacer $w={7} />
      <Text $w={28} $size={8} $color="#666">|◀ ◀</Text>
      <Field $w={32}><Text $size={10}>1</Text></Field>
      <DropButton><Triangle /></DropButton>
      <Text $ml={7} $w={25} $size={8} $color="#666">▶ ▶|</Text>
      <Divider />
      <Text $ml={60} $w={93} $size={9} $bold $ls={-0.4}>多角形</Text>
      <Triangle $dir="right" $m="1px 0 0 0" />
      <HTrack>
        <Triangle $dir="left" $m="2px 0 0 0" />
        <Spacer $w={196} />
        <Thumb />
        <Spacer />
      </HTrack>
    </StatusBar>
  </Column>
);

const IconDock = () => (
  <Column $w={28} $mr={2}>
    <DockHeader $end><Collapse /></DockHeader>
    <DockGroup $h={73}>
      <Grip $across />
      <DockIcon $mt={1}>
        <Icon w={14} h={11} box="0 0 14 11"><path d="M0 1h14M0 5h14M0 9.500h14" stroke="#ccc" strokeWidth="1.500" /></Icon>
      </DockIcon>
      <DockIcon>
        <Icon w={14} h={10} box="1 3 14 10">{TOOLS.gradient}</Icon>
      </DockIcon>
      <DockIcon>
        <Icon w={15}><circle cx="6" cy="6" r="5" fill="#ddd" /><circle cx="10" cy="10" r="5" fill="#777" fillOpacity=".7" stroke="#ccc" /></Icon>
      </DockIcon>
    </DockGroup>
    <DockGroup $h={73}>
      <Grip $across />
      <DockIcon $mt={1} $font='500 13px "Noto Sans"'>A<Caret /></DockIcon>
      <DockIcon $font='bold 13px "Noto Sans"'>¶</DockIcon>
      <DockIcon $font='italic bold 16px "Liberation Serif"'>O</DockIcon>
    </DockGroup>
    <DockGroup $h={52}>
      <Grip $across />
      <DockIcon>
        <Icon w={15}><path d="M3 3h11v11H3z" fill="#888" /><circle cx="5" cy="5" r="4" fill="#bbb" /><circle cx="9" cy="9" r="3" fill="#444" stroke="#ddd" strokeWidth="1.500" /></Icon>
      </DockIcon>
      <DockIcon>
        <Icon w={14}>
          <circle cx="6" cy="10" r="3.500" stroke="#ccc" strokeWidth="2" />
          <circle cx="6" cy="10" r="5" stroke="#ccc" strokeWidth="2" strokeDasharray="2 1.900" />
          <circle cx="12.500" cy="4" r="2" stroke="#ccc" strokeWidth="1.500" />
          <circle cx="12.500" cy="4" r="3.200" stroke="#ccc" strokeWidth="1" strokeDasharray="1.200 1.300" />
        </Icon>
      </DockIcon>
    </DockGroup>
    <DockGroup $h={31}>
      <Grip $across />
      <DockIcon $mt={1}>
        <Icon w={12} h={10} box="0 0 12 10"><path d="M0 0l12 5-12 5z" fill="#c8c8c8" /></Icon>
      </DockIcon>
    </DockGroup>
    <DockGroup $h={300} />
  </Column>
);

const Tabs = ({ items, mt, h }) => (
  <PanelTabs $mt={mt} $h={h}>
    {items.map(([label, w, active, narrow, pl]) => (
      <PanelTab key={label} $w={w} $active={active} $pl={pl}>
        <Text $size={10} $narrow={narrow}>{label}</Text>
      </PanelTab>
    ))}
    <Spacer />
    <PanelMenu />
  </PanelTabs>
);

const Libraries = () => (
  <>
    <Tabs items={[['変形', 29, false, 0.92], ['情報', 28, false, 0.92], ['ライブラリ', 40, true, 0.76], ['リンク', 29, false, 0.76]]} />
    <Panel $h={135}>
      <Spacer $w={4} />
      <PanelRow $h={13}>
        <DropButton $w={130} $h={13}><Spacer $w={116} /><Triangle $s={2.5} $color="#888" /></DropButton>
        <Toggle $w={15} $h={13} $ml={5} $on><Squares n={2} /></Toggle>
        <Toggle $w={17} $h={13}><ListLines /></Toggle>
      </PanelRow>
      <Spacer $w={5} />
      <PanelRow $h={17}>
        <Field $w={153} $h={17} $bg="#757575" $edge="#6b6b6b">
          <Icon w={9}><circle cx="6" cy="6" r="4.500" stroke="#276aa5" strokeWidth="2" /><path d="M9.500 9.500L15 15" stroke="#276aa5" strokeWidth="3" /></Icon>
          <Text $size={9} $narrow={0.88} $ls={-0.25} $color="#505050">Adobe Stock を検索</Text>
        </Field>
        <DropButton $w={15} $h={17}><Triangle $s={2.5} $color="#aaa" /></DropButton>
      </PanelRow>
      <Spacer $w={4} />
      <LibraryError>
        <CloudX w={38} h={28} color="#5a5a5a" bg="#2d2d2d" />
        <ErrorText>Creative Cloud Libraries を初期化中にエ<br />ラーが発生しました</ErrorText>
      </LibraryError>
      <PanelRow $h={18} $pl={136}>
        <CloudX w={13} h={10} color="#bbb" bg="#353535" />
        <Spacer $w={6} />
        <Trash color="#666" />
      </PanelRow>
    </Panel>
  </>
);

const Swatches = () => (
  <>
    <Tabs mt={1} items={[['スウォッチ', 41, true, 0.76], ['カラー', 26, false, 0.76], ['カラーガイ', 41, false, 0.76, 4], ['Color テー', 46, false, 0.88, 6]]} />
    <Panel $h={134}>
      <Spacer $w={6} />
      <PanelRow $h={24} $pl={5}>
        <SwatchWell>
          <WellStroke $x={8} $y={8} $s={13} $p={2} />
          <WellFill $x={0} $y={0} $s={14} />
        </SwatchWell>
        <Toggle $w={18} $h={16} $ml={1} $edge><ListLines /></Toggle>
        <Toggle $w={19} $h={16} $edge $on><Squares n={3} /></Toggle>
      </PanelRow>
      <Spacer $w={2} />
      <ListFrame $h={88}>
        <ListBody>
          {SWATCHES.map((row, r) => (
            <SwatchRow key={r}>
              {row.map((bg, i) => <Swatch key={i} $bg={bg} $selected={r === 2 && i === 1} />)}
            </SwatchRow>
          ))}
          {[GRAYS, BRIGHTS].map((row, r) => (
            <SwatchRow key={r} $mt={1.2}>
              <Folder w={10} />
              {row.map((bg) => <Swatch key={bg} $bg={bg} />)}
            </SwatchRow>
          ))}
        </ListBody>
        <ListScroll><Triangle $dir="up" $s={2.5} $color="#777" /><Triangle $s={2.5} $color="#777" /></ListScroll>
      </ListFrame>
      <PanelRow $h={14}>
        <LibraryMenu />
        <Spacer $w={9} />
        <Icon w={9}><path d="M14 2L3 8l10 6" stroke="#bbb" strokeWidth="2.500" /><path d="M3 8l4-4v8zM12 0h4v5z" fill="#bbb" stroke="#bbb" strokeWidth="2" /></Icon>
        <Spacer $w={9} />
        <Icon w={12} h={10} box="0 0 16 13"><path d="M3 12a3 3 0 0 1 0-7c1-5 8-6 10-1 4 2 3 8-1 8z" fill="#bbb" /><path d="M5 8h5M9 5l3 3-3 3" stroke="#333" strokeWidth="1.500" /></Icon>
        <Spacer $w={13} />
        <Squares n={3} w={8} />
        <Triangle $s={1.5} $m="6px 0 0 1px" />
        <Spacer $w={9} />
        <Boxed color="#aaa" />
        <Spacer $w={10} />
        <Folder />
        <Spacer $w={9} />
        <NewItem />
        <Spacer $w={9} />
        <Trash />
      </PanelRow>
    </Panel>
  </>
);

const SymbolsPanel = () => (
  <>
    <Tabs mt={2} items={[['シンボル', 39, true, 0.8], ['ブラシ', 30, false, 0.76], ['グラフィックスタイル', 73, false, 0.76, 4]]} />
    <Panel $h={133}>
      <Spacer $w={6} />
      <ListFrame $h={113}>
        <ListBody>
          <SymbolGrid>
            {SYMBOLS.map((drawing, i) => (
              <SymbolCell key={i}><Icon w={24} box="0 0 24 24">{drawing}</Icon></SymbolCell>
            ))}
          </SymbolGrid>
        </ListBody>
        <ListScroll><Triangle $dir="up" $s={2.5} $color="#777" /><Triangle $s={2.5} $color="#777" /></ListScroll>
      </ListFrame>
      <PanelRow $h={14}>
        <LibraryMenu />
        <Spacer $w={50} />
        <Icon w={8} box="0 0 8 8"><path d="M1 0v4h6M5 2l2 2-2 2" stroke="#626262" strokeWidth="1.500" /></Icon>
        <Spacer $w={10} />
        <Icon w={12} h={10} box="0 0 12 10"><path d="M4 2H2C0 2 0 8 2 8h2M8 2h2c2 0 2 6 0 6H8M5 0l1 2M7 8l1 2" stroke="#5e5e5e" strokeWidth="1.500" /></Icon>
        <Spacer $w={8} />
        <Boxed color="#606060" />
        <Spacer $w={10} />
        <NewItem color="#606060" />
        <Spacer $w={9} />
        <Trash color="#606060" />
      </PanelRow>
    </Panel>
  </>
);

const PolygonDialog = () => (
  <Dialog>
    <DialogTitle><Text $size={10} $ls={-0.4}>多角形</Text></DialogTitle>
    <DialogBody>
      <FormRow $mt={15} $pl={20}>
        <Text $w={45} $size={10} $bold>半径 (R) :</Text>
        <Field $w={75}><Text $size={10.5} $ls={-0.5}>200 px</Text></Field>
      </FormRow>
      <FormRow $mt={15} $pl={11}>
        <Text $w={49} $size={10} $bold>辺の数 (S) :</Text>
        <FocusRing>
          <Stepper><Triangle $dir="up" $s={2.5} /><Triangle $s={2.5} /></Stepper>
          <Spacer $w={1} />
          <Field $w={48} $pl={1}><TextCursor /><Text $size={10.5}>5</Text></Field>
        </FocusRing>
      </FormRow>
      <DialogButtons>
        <DialogButton $primary><Text $size={10} $bold>OK</Text></DialogButton>
        <DialogButton><Text $size={10} $bold>キャンセル</Text></DialogButton>
      </DialogButtons>
    </DialogBody>
  </Dialog>
);

const App = () => (
  <>
    <GlobalStyle />
    <Window>
      <TopBar />
      <Controls />
      <Body>
        <Toolbox />
        <Document />
        <IconDock />
        <Column $w={177}>
          <DockHeader $end><Collapse right /></DockHeader>
          <Libraries />
          <Swatches />
          <SymbolsPanel />
          <Tabs mt={3} h={12} items={[['アピアランス', 49, true, 0.76], ['CSS プロパティ', 64, false, 0.82]]} />
          <Tabs mt={4} h={13} items={[['レイヤー', 39, false, 0.8], ['アートボード', 52, true, 0.8]]} />
          <Tabs mt={3} h={14} items={[['アセットの書き出し', 76, true, 0.78]]} />
        </Column>
      </Body>
    </Window>
    <PolygonDialog />
  </>
);

export default App;
